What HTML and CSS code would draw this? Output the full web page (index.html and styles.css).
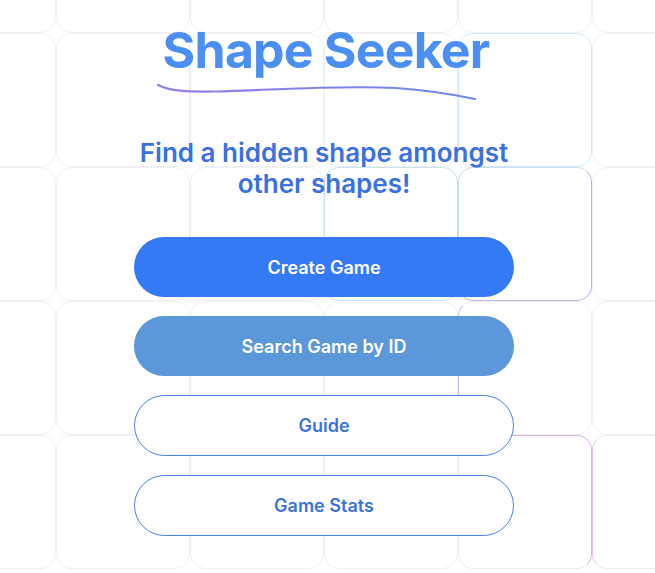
FILE: index.html
```html
<!DOCTYPE html>
<html lang="en">
<head>
<meta charset="utf-8">
<title>Shape Seeker</title>
<link rel="stylesheet" href="styles.css">
</head>
<body>
<div class="bg">
  <div class="bg-grid">
    <div class="cell"></div><div class="cell"></div><div class="cell"></div><div class="cell"></div><div class="cell"></div><div class="cell"></div>
    <div class="cell"></div><div class="cell"></div><div class="cell"></div><div class="cell"></div><div class="cell c-blue1"></div><div class="cell"></div>
    <div class="cell"></div><div class="cell"></div><div class="cell"></div><div class="cell c-blue2"></div><div class="cell c-bluepurple"></div><div class="cell"></div>
    <div class="cell"></div><div class="cell"></div><div class="cell"></div><div class="cell"></div><div class="cell c-purple"></div><div class="cell"></div>
    <div class="cell"></div><div class="cell"></div><div class="cell"></div><div class="cell"></div><div class="cell c-pink"></div><div class="cell c-pink2"></div>
  </div>
</div>
<main class="main">
  <header class="brand">
    <h1 class="title">Shape Seeker</h1>
    <svg class="underline" width="322" height="20" viewBox="0 0 322 20" aria-hidden="true">
      <defs>
        <linearGradient id="ul" x1="0" y1="0" x2="1" y2="0">
          <stop offset="0" stop-color="#9a7ce8"/>
          <stop offset="1" stop-color="#6a88ec"/>
        </linearGradient>
      </defs>
      <path d="M2 3 C 14 9, 30 10, 60 9.5 C 120 8, 180 3, 240 6 C 270 8, 300 13, 319 17" fill="none" stroke="url(#ul)" stroke-width="2.2" stroke-linecap="round"/>
    </svg>
  </header>
  <p class="tagline">Find a hidden shape amongst<br>other shapes!</p>
  <nav class="actions">
    <button class="btn btn-primary">Create Game</button>
    <button class="btn btn-secondary">Search Game by ID</button>
    <button class="btn btn-outline">Guide</button>
    <button class="btn btn-outline">Game Stats</button>
  </nav>
</main>
</body>
</html>
```
FILE: styles.css
```css
* { box-sizing: border-box; }
html, body {
  margin: 0;
  padding: 0;
  background: #ffffff;
  width: 655px;
  height: 573px;
  overflow: hidden;
}
body {
  position: relative;
  font-family: Inter, "Noto Sans", "Liberation Sans", sans-serif;
}
.bg {
  position: absolute;
  inset: 0;
  overflow: hidden;
  z-index: 0;
}
.bg-grid {
  position: absolute;
  left: -78px;
  top: -101px;
  display: grid;
  grid-template-columns: repeat(6, 134px);
  grid-auto-rows: 134px;
}
.cell {
  border: 1px solid #f1f1f3;
  border-radius: 15px;
}
.c-blue1 { border-color: #d3e8f6; }
.c-blue2 { border-color: #c6e1f2; }
.c-bluepurple {
  border-top-color: #c8dff3;
  border-left-color: #c5daf1;
  border-right-color: #bcb2e8;
  border-bottom-color: #c2b6ea;
}
.c-purple { border-color: #f0eef4; border-left-color: #c8b6ea; }
.c-pink { border-color: #e0b2ea; border-left-color: #eee; border-bottom-color: #f0e6f2; }
.c-pink2 { border-color: #f3e6f4; border-left-color: #e6c4ec; }

.main {
  position: relative;
  z-index: 1;
  width: 380px;
  margin-left: 134px;
  display: flex;
  flex-direction: column;
  align-items: center;
}
.brand {
  display: flex;
  flex-direction: column;
  align-items: center;
  margin-top: 20px;
}
.title {
  margin: 0;
  font-size: 50px;
  line-height: 60px;
  font-weight: 700;
  color: #4a8ff1;
  white-space: nowrap;
  letter-spacing: -0.8px;
  padding-left: 4px;
}
.underline {
  display: block;
  margin-top: 2px;
  margin-left: -14px;
}
.tagline {
  margin: 35px 0 0;
  text-align: center;
  font-size: 26px;
  line-height: 31px;
  font-weight: 600;
  color: #3a70e0;
  white-space: nowrap;
}
.actions {
  width: 100%;
  display: flex;
  flex-direction: column;
  gap: 19px;
  margin-top: 38px;
}
.btn {
  width: 100%;
  height: 60px;
  border-radius: 31px;
  font-family: inherit;
  font-size: 18px;
  font-weight: 600;
  border: 0;
  padding: 0;
}
.btn-primary { background: #3579f5; color: #ffffff; }
.btn-secondary { background: #5c97da; color: #ffffff; }
.btn-outline {
  height: 61px;
  background: #ffffff;
  color: #3a72df;
  border: 1.5px solid #4a80e2;
}
```
